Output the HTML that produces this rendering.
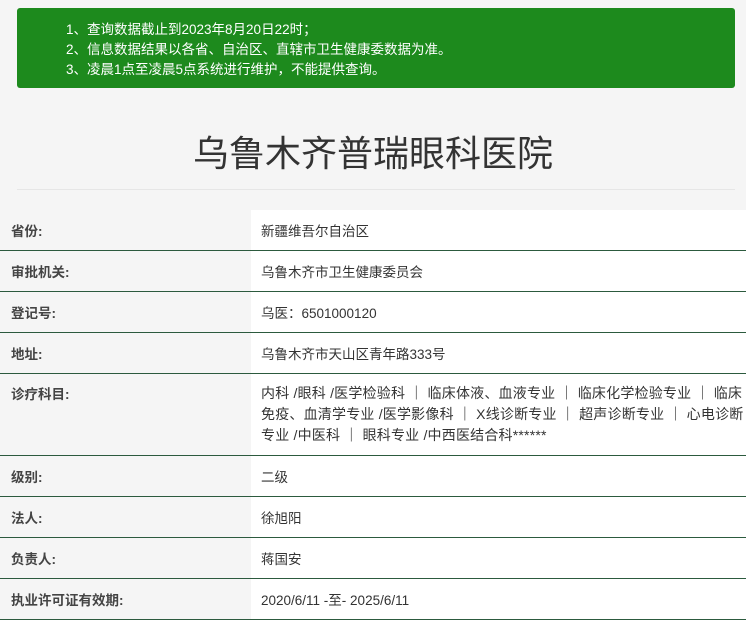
<!DOCTYPE html>
<html><head><meta charset="utf-8"><style>
body{margin:0;width:746px;height:619px;overflow:hidden;background:#f5f5f5;font-family:"Liberation Sans","Noto Sans CJK SC",sans-serif;}
.notice{position:absolute;left:17px;top:8px;width:718px;height:80px;background:#1d8a1d;border-radius:3px;color:#fff;font-size:13.5px;line-height:20px;box-sizing:border-box;padding:12px 0 0 49px;}
h1{position:absolute;left:0;top:128px;width:746px;margin:0;text-align:center;font-weight:normal;font-size:36px;line-height:52px;color:#333;}
.sep{position:absolute;left:17px;top:189px;width:718px;height:1px;background:#e6e6e6;}
table{position:absolute;left:0;top:210px;width:746px;border-collapse:collapse;font-size:13.5px;color:#333;}
td{border-bottom:1px solid #2c5a3e;height:40px;padding:0 0 0 11px;vertical-align:middle;}
td.l{width:240px;background:#f5f5f5;font-weight:bold;color:#444;}
td.v{background:#fff;padding-left:10px;}
tr.m td{height:81px;line-height:21px;}
tr.m td.v{font-size:14px;letter-spacing:0.2px;}
tr.m td.l{vertical-align:top;padding-top:10px;height:71px;}
</style></head><body>
<div class="notice">1、查询数据截止到2023年8月20日22时；<br>2、信息数据结果以各省、自治区、直辖市卫生健康委数据为准。<br>3、凌晨1点至凌晨5点系统进行维护，不能提供查询。</div>
<h1>乌鲁木齐普瑞眼科医院</h1>
<div class="sep"></div>
<table>
<tr><td class="l">省份:</td><td class="v">新疆维吾尔自治区</td></tr>
<tr><td class="l">审批机关:</td><td class="v">乌鲁木齐市卫生健康委员会</td></tr>
<tr><td class="l">登记号:</td><td class="v">乌医：6501000120</td></tr>
<tr><td class="l">地址:</td><td class="v">乌鲁木齐市天山区青年路333号</td></tr>
<tr class="m"><td class="l">诊疗科目:</td><td class="v">内科 /眼科 /医学检验科 <b>｜</b> 临床体液、血液专业 <b>｜</b> 临床化学检验专业 <b>｜</b> 临床<br>免疫、血清学专业 /医学影像科 <b>｜</b> X线诊断专业 <b>｜</b> 超声诊断专业 <b>｜</b> 心电诊断<br>专业 /中医科 <b>｜</b> 眼科专业 /中西医结合科******</td></tr>
<tr><td class="l">级别:</td><td class="v">二级</td></tr>
<tr><td class="l">法人:</td><td class="v">徐旭阳</td></tr>
<tr><td class="l">负责人:</td><td class="v">蒋国安</td></tr>
<tr><td class="l">执业许可证有效期:</td><td class="v">2020/6/11 -至- 2025/6/11</td></tr>
</table>
</body></html>
